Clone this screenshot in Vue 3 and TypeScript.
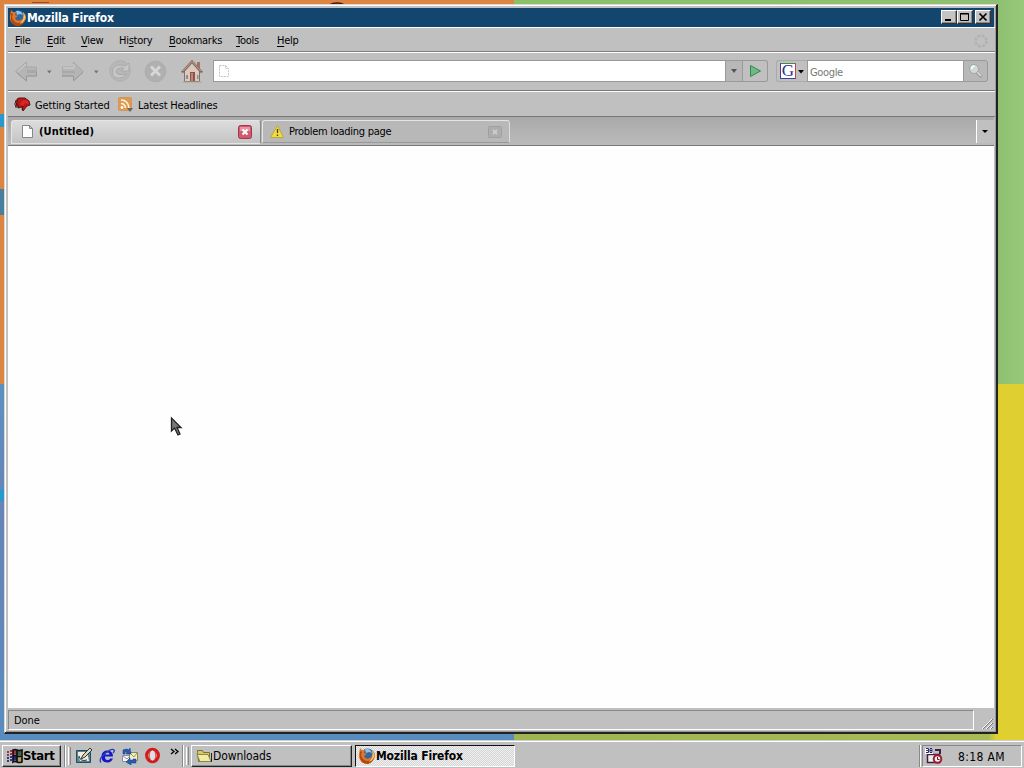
<script setup lang="ts">
interface MenuItem { key: string; before: string; after: string; width: number }

const menus: MenuItem[] = [
  { before: '', key: 'F', after: 'ile', width: 32 },
  { before: '', key: 'E', after: 'dit', width: 34 },
  { before: '', key: 'V', after: 'iew', width: 38 },
  { before: 'Hi', key: 's', after: 'tory', width: 50 },
  { before: '', key: 'B', after: 'ookmarks', width: 67 },
  { before: '', key: 'T', after: 'ools', width: 41 },
  { before: '', key: 'H', after: 'elp', width: 37 },
]
</script>

<template>
  <div class="desktop">
    <div class="wall orange"></div>
    <div class="wall green"></div>
    <div class="wall blue"></div>
    <div class="wall yellow"></div>
    <i class="chip c1"></i><i class="chip c2"></i><i class="chip c3"></i><i class="chip c4"></i>
    <svg class="arc" width="20" height="4"><path d="M2 4Q10 0 18 4" fill="none" stroke="#301818" stroke-width="1.3" /></svg>

    <section class="window">
      <header class="title">
        <svg class="fox" width="18" height="18" viewBox="0 0 18 18">
          <circle cx="9.500" cy="8.500" r="7" fill="#34659c" /><path d="M7 2q5-1 7 4l-3-1-3 1z" fill="#8fc4e8" />
          <path d="M2 1l2 2 3 0-1 3 3 1-3 2q1 4 6 2 5-3 2-8 5 4 2 9-4 6-10 4-6-3-5-9z" fill="#dd7828" />
          <path d="M2 4l2 1-1 3q1 5 6 6 5 0 7-5 0 6-6 8-7 0-8-6z" fill="#b4460f" /><path d="M14 3q4 5 1 9-1 2-4 3 5-5 3-12z" fill="#ecc974" />
        </svg>
        <b>Mozilla Firefox</b>
        <div class="controls">
          <span><svg width="14" height="12"><path d="M3 9h6" stroke="#000" stroke-width="2" /></svg></span>
          <span><svg width="14" height="12"><path d="M2.500 2.500h8v7h-8zM2 3h9" fill="none" stroke="#000" /></svg></span>
          <span class="gap"><svg width="14" height="12"><path d="M3.500 2.500l7 7M10.500 2.500l-7 7" stroke="#000" stroke-width="1.700" /></svg></span>
        </div>
      </header>

      <nav class="menubar">
        <span v-for="m in menus" :key="m.after" class="menu" :style="{ width: m.width + 'px' }">{{ m.before }}<u>{{ m.key }}</u>{{ m.after }}</span>
        <svg class="throbber" width="16" height="16"><circle cx="8" cy="8" r="5.500" fill="none" stroke="#b2b2b2" stroke-width="2.500" stroke-dasharray="3 1.300" /></svg>
      </nav>

      <div class="toolbar">
        <svg class="navicons" width="205" height="36" viewBox="8 53 205 36">
          <g fill="#b5b5b5" stroke="#a8a8a8">
            <path d="M15.500 71.500l11-9.500v5h10v9h-10v5z" /><path d="M83.500 71.500l-10-9.500v5h-11v9h11v5z" />
          </g>
          <path d="M17 73l9.500 8v-5h10v-4M62 76h11.500v4.500l9.500-8" fill="none" stroke="#999" />
          <path d="M26 64l-8 7.500M63 68h11v-4" fill="none" stroke="#d4d4d4" />
          <path d="M27 70h9v3h-9zM63 71h12v2H63z" fill="#a9a9a9" />
          <path d="M47 70.500h4.500l-2.200 3zM94 70.500h4.500l-2.200 3z" fill="#747474" />
          <circle cx="120" cy="71" r="10.300" fill="#b7b7b7" stroke="#b0b0b0" />
          <path d="M129 63v8h-8l3-3q-8-1-8 4 1 4 11 2-4 5-10 4-6-2-4-9 3-6 12-3z" fill="#c7c7c7" stroke="#a4a4a4" stroke-width=".8" />
          <circle cx="155.500" cy="71.500" r="10.300" fill="#b0b0b0" stroke="#acacac" /><path d="M151 66.500l9 9m0-9l-9 9" stroke="#d6d6d6" stroke-width="3" />
          <path d="M184.500 71v10.500h15V71l-7.500-8z" fill="#dac9bf" stroke="#85716a" />
          <path d="M197 62h3v7h-3z" fill="#a17461" /><path d="M182 72.500l10-11 10 11" fill="none" stroke="#876960" stroke-width="2.500" /><path d="M183 71l9-9.500 9 9.500" fill="none" stroke="#c7a292" />
          <path d="M190 72h5v9h-5z" fill="#965047" /><path d="M191 73h2v8h-2z" fill="#b88875" /><path d="M186 75h2v4h-2zM197 75h1.500v4H197z" fill="#859194" /><path d="M183 82h19" stroke="#9aab92" />
        </svg>
        <div class="location">
          <svg width="12" height="14"><path d="M1.500 1.500h6l3 3v8h-9zM7.500 1.500v3h3" fill="#fff" stroke="#c4c4c4" stroke-dasharray="2 1" /></svg>
        </div>
        <div class="drop"><svg width="8" height="6"><path d="M1 1h6l-3 4z" fill="#555" /></svg></div>
        <div class="go"><svg width="13" height="14"><path d="M1.500 1.500v11l10-5.500z" fill="#70b984" stroke="#358854" /></svg></div>
        <div class="engine"><span class="g">G</span><svg width="7" height="5"><path d="M0 1h6L3 4.500z" fill="#000" /></svg></div>
        <div class="query">Google</div>
        <div class="lens"><svg width="16" height="16"><path d="M8.500 9l5 5" stroke="#999" stroke-width="3" /><path d="M9 9l4 4" stroke="#e1e1e1" stroke-width="1.500" /><circle cx="6" cy="6" r="4.500" fill="#d0d8da" stroke="#a0a5a6" /><path d="M3.500 6q0-3 3-3" stroke="#fff" fill="none" stroke-width="1.500" /></svg></div>
      </div>

      <div class="bookmarks">
        <svg width="20" height="18"><path d="M6 2h6l4 3 1 4-3 1-4 5-1-4-4 1 1-2-4 0 2-2-2-2 2-1 0-2z" fill="#b91818" stroke="#611414" /><path d="M10 4l5 1 1 3-4-1-2 3-3-2z" fill="#df2525" /><path d="M2 5h3M1 8h4M2 11h4M10 10l-1 4" stroke="#401414" /></svg>
        <span class="bm1">Getting Started</span>
        <svg width="18" height="18"><rect x="1.500" y="1.500" width="13" height="13" rx="1" fill="#df9950" stroke="#d2965d" /><path d="M4 4q7 0 8 8M4 7.500q4 0 4.500 4.500" fill="none" stroke="#fff4dc" stroke-width="1.600" /><circle cx="5" cy="11.500" r="1.400" fill="#fff" /><path d="M10 12h6l-3 4z" fill="#666" /></svg>
        <span class="bm2">Latest Headlines</span>
      </div>

      <div class="tabs">
        <div class="tab active">
          <svg width="13" height="16"><path d="M1.500 1.500h7l3 3v9h-10zM8.500 1.500v3h3" fill="#fff" stroke="#888" /></svg>
          <b>(Untitled)</b>
          <svg class="close" width="15" height="14"><rect x=".5" y=".5" width="13" height="13" rx="2" fill="#d05b70" stroke="#a0374b" /><path d="M2 2h10v4H2z" fill="#e795a0" /><path d="M4.500 4.500l5 5m0-5l-5 5" stroke="#fff" stroke-width="2.200" /></svg>
        </div>
        <div class="tab second">
          <svg width="15" height="15"><path d="M7.500 1.500l6 12h-13z" fill="#eedb48" stroke="#c1a82c" stroke-linejoin="round" /><path d="M7.500 5v4M7.500 10.500v1.500" stroke="#4b3c00" stroke-width="1.300" /></svg>
          <span>Problem loading page</span>
          <svg class="close" width="15" height="14"><rect x=".5" y="1.500" width="13" height="11" rx="1" fill="#adadad" stroke="#a0a0a0" /><path d="M5 5l4 4m0-4l-4 4" stroke="#ccc" stroke-width="1.800" /></svg>
        </div>
        <div class="alltabs"><svg width="7" height="5"><path d="M0 1h6L3 4z" fill="#000" /></svg></div>
      </div>
      <main></main>
      <footer class="status"><span class="done">Done</span><div class="grip"><svg width="14" height="14"><path d="M2 13L12 3M6 13l6-6M10 13l2-2" stroke="#fff" /><path d="M3 13L13 3M7 13l6-6M11 13l2-2" stroke="#777" /></svg></div></footer>
    </section>

    <svg class="pointer" width="14" height="22"><path d="M1.500 2v13l3-3 3.500 7 2-1-3-6.500h4z" fill="#777" stroke="#202020" stroke-width="1.300" /></svg>

    <footer class="taskbar">
      <div class="start">
        <svg width="17" height="16"><path d="M7 2q2-1 4 0v5q-2-1-4 0z" fill="#a83041" /><path d="M11 2q2 1 4 0v5q-2 1-4 0z" fill="#2c6b4d" /><path d="M7 8q2-1 4 0v5q-2-1-4 0z" fill="#292c82" /><path d="M11 8q2 1 4 0v5q-2 1-4 0z" fill="#aaa152" /><path d="M7 2q2-1 4 0 2 1 5 0v12q-3 1-5 0-2-1-4 0zM11 2v12M7 8q2-1 4 0 2 1 4 0" fill="none" stroke="#111" stroke-width="1.700" /><path d="M1 4h2m1-1h2M1 7h2m1-1h2" stroke="#8e3757" stroke-width="2" /><path d="M1 10h2m1-1h2M1 13h2m1-1h2" stroke="#38367f" stroke-width="2" /></svg>
        <b>Start</b>
      </div>
      <i class="divider d1"></i><i class="divider ridge"></i>
      <div class="quick">
        <svg width="18" height="18"><path d="M1.500 3.500h13l1 2v10h-14z" fill="#598494" stroke="#234b62" /><path d="M3 5h9l2 9H5L3 8z" fill="#eeeee1" /><path d="M6 12l2-4 7-7 2 2-7 7z" fill="#ded7b5" stroke="#333" /><path d="M4 9q1 6 8 4" stroke="#333" fill="none" /></svg>
        <svg width="18" height="18"><path fill-rule="evenodd" d="M15 9.500H7q0 4 3 3.500 1.500 0 2-1.500h3q-2 4.500-6 4Q3 15 3.500 9 4 3.500 9.500 3.500q5.500.5 5.500 6zM7 7.500h4.500q0-2-2-2T7 7.500z" fill="#1718c5" /><path d="M3 15.500q-3-3 4-9 7-5.500 9-3.500 1 1-1 3" fill="none" stroke="#263bc9" stroke-width="1.300" /></svg>
        <svg width="18" height="18"><path d="M1.500 8.500h8v6h-8z" fill="#f7f7ea" stroke="#7f8fac" /><path d="M2 9l4 3 3-3" fill="none" stroke="#8793ae" /><path d="M8.500 5.500h8v8h-8z" fill="#f2edc9" stroke="#8d8658" /><path d="M9 6l4 4 3-4" fill="none" stroke="#a39958" /><path d="M2 7V3q4-2 6 0l1-2 1 6-5 0 1-2-2 0v2zM15 12v4h-5v2l-5-3 4-4v2h3v-1z" fill="#285bb0" stroke="#153c87" stroke-width=".5" /></svg>
        <svg width="18" height="18"><ellipse cx="8.500" cy="8.500" rx="5.800" ry="6.200" fill="#eee" stroke="#d31c1c" stroke-width="3.300" /><ellipse cx="8.500" cy="8.500" rx="3.300" ry="5.500" fill="#e5dddd" stroke="#a41c22" stroke-width=".8" /></svg>
      </div>
      <svg class="chev" width="10" height="8"><path d="M1 1l3 2.500L1 6M5 1l3 2.500L5 6" fill="none" stroke="#000" stroke-width="1.300" /></svg>
      <i class="divider d2"></i><i class="divider ridge"></i>
      <div class="task downloads">
        <svg width="17" height="14"><path d="M1.500 3.500v-2h5l1 2h6v9h-11z" fill="#d4ca67" stroke="#76713b" /><path d="M3 5.500h9l3 7H4L1 5.500z" fill="#f1eca2" stroke="#8e8846" /><path d="M15.500 4v9" stroke="#222" /></svg>
        <span>Downloads</span>
      </div>
      <div class="task current">
        <svg width="18" height="18" viewBox="0 0 18 18">
          <circle cx="9.500" cy="8.500" r="7" fill="#34659c" /><path d="M7 2q5-1 7 4l-3-1-3 1z" fill="#8fc4e8" />
          <path d="M2 1l2 2 3 0-1 3 3 1-3 2q1 4 6 2 5-3 2-8 5 4 2 9-4 6-10 4-6-3-5-9z" fill="#dd7828" />
          <path d="M2 4l2 1-1 3q1 5 6 6 5 0 7-5 0 6-6 8-7 0-8-6z" fill="#b4460f" /><path d="M14 3q4 5 1 9-1 2-4 3 5-5 3-12z" fill="#ecc974" />
        </svg>
        <b>Mozilla Firefox</b>
      </div>
      <i class="divider tray-edge"></i>
      <div class="tray">
        <svg width="18" height="18"><path d="M2.500 7.500h12v8h-12z" fill="#eee" stroke="#402040" stroke-width="1.500" /><path d="M0 1h8v6H0z" fill="#fff" /><path d="M1 1.500h2.500v2H1.500 3.500v2H1M5 1.500h2v4H5v-4M5 3.500h2" stroke="#25255e" fill="none" /><path d="M10 3h5v4" stroke="#402040" stroke-width="2" fill="none" /><circle cx="12.500" cy="12" r="3.800" fill="#f7eded" stroke="#9b1e35" stroke-width="2" /><path d="M12.500 10v2.500h2" stroke="#661728" fill="none" /></svg>
        <span>8:18 AM</span>
      </div>
    </footer>
  </div>
</template>

<style>
html, body { overflow: hidden; }
</style>
<style scoped>
* { box-sizing: border-box; }
svg { display: block; flex: none; }
.desktop { position: relative; width: 1024px; height: 768px; overflow: hidden; font: 11px/14px "DejaVu Sans Condensed", "DejaVu Sans", sans-serif; font-stretch: condensed; color: #000; white-space: nowrap; }
.wall { position: absolute; }
.orange { left: 0; top: 0; width: 514px; height: 384px; background: #dc8440; }
.green { left: 514px; top: 0; width: 510px; height: 384px; background: linear-gradient(90deg, #8bc069 0, #8fc071 95%, #98c87b); }
.blue { left: 0; top: 384px; width: 514px; height: 384px; background: linear-gradient(#5b91bf, #6685b9 30%, #6186b8 60%, #578ec0); }
.yellow { left: 514px; top: 384px; width: 510px; height: 384px; background: linear-gradient(90deg, #9eb552 0, #a8bb55 93%, #dfcf31 94.500%); }
.chip { position: absolute; left: 0; width: 4px; background: #2899cb; }
.c1 { top: 114px; height: 13px; } .c2 { top: 189px; height: 26px; background: #477f9f; } .c3 { top: 489px; height: 12px; } .c4 { left: 32px; top: 2px; width: 17px; height: 1px; background: #8c4b32; }
.arc { position: absolute; left: 327px; top: 1px; }
.window { position: absolute; left: 4px; top: 4px; width: 994px; height: 730px; padding: 3px 1px 2px 3px; background: #c0c0c0; border: 1px solid #d8d8d8; border-right: 2px solid #222; border-bottom: 2px solid #222; box-shadow: inset 1px 1px #fff, inset -1px -1px #999; display: flex; flex-direction: column; }
.title { height: 19px; margin-right: 1px; background: #12466e; color: #fff; display: flex; align-items: center; font-size: 12px; }
.fox { margin-left: 1px; }
.title b { letter-spacing: -.17px; }
.controls { margin-left: auto; margin-right: 3px; margin-top: -1px; display: flex; }
.controls span { width: 16px; height: 14px; background: #c4c4c4; border: 1px solid; border-color: #fff #333 #333 #fff; box-shadow: inset -1px -1px #888; }
.controls .gap { margin-left: 2px; }
.menubar { height: 25px; border-top: 1px solid #fff; border-bottom: 1px solid #808080; display: flex; align-items: center; padding: 2px 0 0 7px; letter-spacing: -.25px; }
.menu { height: 14px; flex: none; }
.menu u { text-underline-offset: 2px; text-decoration-thickness: 1px; }
.throbber { margin-left: auto; margin-right: 6px; }
.toolbar { height: 39px; border-top: 1px solid #fff; border-bottom: 1px solid #777; display: flex; align-items: center; padding-bottom: 1px; }
.navicons { align-self: flex-start; }
.location { width: 512px; height: 22px; background: #fff; border: 1px solid #999; border-right: 0; padding: 3px 4px; }
.drop, .go, .lens { height: 22px; border: 1px solid #999; display: flex; align-items: center; justify-content: center; background: #b8b8b8; }
.drop { width: 18px; } .go { width: 25px; border-radius: 0 3px 3px 0; border-left: 0; background: #c0c0c0; }
.engine { margin-left: 8px; width: 31px; height: 22px; border: 1px solid #aaa; border-right: 0; border-radius: 3px 0 0 3px; display: flex; align-items: center; gap: 2px; padding-left: 3px; }
.g { width: 16px; height: 16px; background: #fff; border: 1px solid #34449b; border-right-color: #d23c4d; border-top-color: #488944; color: #28318a; font: 17px/14px "Liberation Serif", serif; text-align: center; }
.query { width: 156px; height: 22px; background: #fff; border: 1px solid #999; border-right: 0; padding: 5px 2px 3px; color: #777; letter-spacing: -.35px; }
.lens { width: 25px; border-radius: 0 3px 3px 0; }
.bookmarks { height: 26px; border-top: 1px solid #fff; border-bottom: 1px solid #777; display: flex; align-items: center; padding: 2px 0 0 5px; }
.bookmarks span { padding-top: 1px; }
.bm1 { width: 75px; margin-left: 2px; letter-spacing: -.13px; } .bookmarks svg + .bm2 { margin-left: 3px; } .bookmarks svg:nth-of-type(2) { margin-left: 7px; }
.bm2 { letter-spacing: -.2px; }
.tabs { height: 29px; padding: 3px 0 2px 3px; border-bottom: 1px solid #777; background: linear-gradient(#a9a9a9, #bbb); display: flex; margin-right: 1px; }
.tab { height: 24px; border: 1px solid #e5e5e5; border-right-color: #888; border-radius: 3px 3px 0 0; display: flex; align-items: center; padding-left: 9px; }
.active { width: 250px; background: linear-gradient(#dcdcdc, #c4c4c4); padding-right: 7px; }
.active b { margin-left: 5px; letter-spacing: .1px; }
.second { width: 248px; height: 23px; margin-left: 1px; padding-left: 7px; padding-right: 6px; background: #b8b8b8; border-bottom-color: #999; border-right-color: #ddd; }
.second span { margin-left: 4px; padding-top: 1px; letter-spacing: -.28px; }
.close { margin-left: auto; }
.alltabs { width: 18px; margin-left: auto; border-left: 1px solid #fff; background: #c0c0c0; display: flex; align-items: center; justify-content: center; }
main { flex: 1; background: #fefefe; margin-right: 1px; }
.status { height: 22px; display: flex; padding-top: 2px; }
.done { width: 966px; height: 20px; border: 1px solid #888; border-color: #888 #fff #fff #888; padding: 3px 5px; letter-spacing: -.1px; }
.grip { display: flex; align-items: flex-end; padding-left: 6px; }
.pointer { position: absolute; left: 170px; top: 416px; }
.taskbar { position: absolute; left: 0; top: 740px; width: 1024px; height: 28px; background: #c0c0c0; border-top: 1px solid #d0d0d0; box-shadow: inset 0 1px #fff; display: flex; align-items: center; padding-top: 2px; }
.start { width: 59px; height: 22px; margin-left: 2px; border: 1px solid; border-color: #fff #222 #222 #fff; box-shadow: inset -1px -1px #888; display: flex; align-items: center; padding-left: 3px; font-size: 13px; }
.start b { letter-spacing: -.35px; }
.divider { width: 2px; height: 22px; flex: none; border-left: 1px solid #888; border-right: 1px solid #fff; }
.d1 { margin-left: 3px; }.ridge { width: 3px; height: 18px; margin-left: 2px; border-left-color: #fff; border-right-color: #888; }
.quick { margin-left: 4px; display: flex; gap: 5px; }
.chev { margin-left: 8px; margin-top: -8px; }
.d2 { margin-left: 2px; }
.task { height: 22px; display: flex; align-items: center; padding-left: 4px; border: 1px solid; }
.downloads { width: 161px; margin-left: 2px; border-color: #fff #222 #222 #fff; box-shadow: inset -1px -1px #888; font-size: 12px; letter-spacing: -.1px; }
.current { width: 160px; margin-left: 3px; padding-left: 2px; border-color: #111 #fff #fff #111; background: repeating-conic-gradient(#d4d4d4 0 25%, #f0f0f0 0 50%) 0 0 / 2px 2px; font-size: 12px; letter-spacing: -.17px; }
.current b { padding-top: 1px; }
.tray-edge { margin-left: auto; }
.tray { width: 100px; height: 22px; margin: 0 2px 0 1px; border: 1px solid; border-color: #888 #fff #fff #888; display: flex; align-items: center; padding-left: 2px; }
.tray span { margin-left: 15px; padding-top: 2px; font-size: 12px; letter-spacing: .35px; }
</style>
